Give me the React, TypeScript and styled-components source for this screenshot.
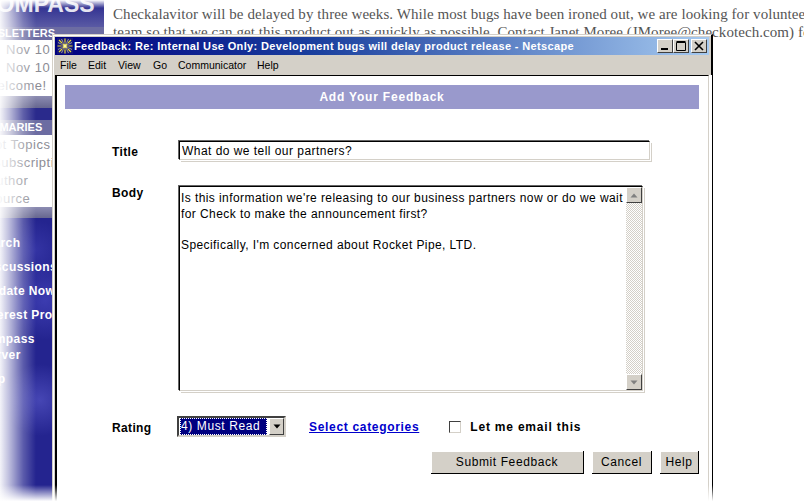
import React from "react"
import styled, { createGlobalStyle } from "styled-components"

const Global = createGlobalStyle`
  html, body {
    margin: 0;
    padding: 0;
    background: #fff;
    overflow: hidden;
  }
  * { box-sizing: border-box; }
`

const Desktop = styled.div`
  position: relative;
  width: 804px;
  height: 503px;
  overflow: hidden;
  display: flex;
  background: #fff;
  font-family: "Liberation Sans", Arial, sans-serif;
`

const Sidebar = styled.aside`
  width: 104px;
  height: 503px;
  flex-shrink: 0;
  display: flex;
  flex-direction: column;
  overflow: hidden;
  background:
    radial-gradient(circle at 45px 300px, #3c3cb0 0, transparent 40px),
    radial-gradient(circle at 40px 400px, #4646b4 0, transparent 36px),
    radial-gradient(circle at 35px 250px, #3434a4 0, transparent 30px),
    #24248f;
`

const Logo = styled.div`
  height: 27px;
  flex-shrink: 0;
  background: linear-gradient(180deg, #25258c, #5a5aa4);
  color: #e4e4f0;
  font-size: 23px;
  font-weight: bold;
  line-height: 8px;
  white-space: nowrap;
  margin-left: -20px;
`

const Band = styled.div<{ $height: number }>`
  height: ${(p) => p.$height}px;
  flex-shrink: 0;
  background: #6c6ca2;
  color: #fff;
  font-size: 11px;
  font-weight: bold;
  line-height: ${(p) => p.$height}px;
  white-space: nowrap;
`

const BandLabel = styled.span<{ $shift: number }>`
  display: block;
  margin-left: ${(p) => p.$shift}px;
`

const LinkList = styled.div<{ $height: number }>`
  height: ${(p) => p.$height}px;
  flex-shrink: 0;
  background: #fff;
  padding-top: 1px;
`

const LinkRow = styled.div<{ $shift: number }>`
  height: 18px;
  margin-left: ${(p) => p.$shift}px;
  font-size: 13px;
  line-height: 18px;
  color: #8c8c94;
  white-space: nowrap;
  letter-spacing: 0.5px;
`

const Divider = styled.div<{ $height: number }>`
  height: ${(p) => p.$height}px;
  flex-shrink: 0;
  background: linear-gradient(180deg, #8c8cb2, #66668f);
`

const DarkStrip = styled.div`
  height: 12px;
  flex-shrink: 0;
  background: #2a2a8c;
`

const NavList = styled.nav`
  display: flex;
  flex-direction: column;
  padding-top: 17px;
`

const NavItem = styled.div<{ $shift: number; $gap?: number }>`
  margin-left: ${(p) => p.$shift}px;
  margin-bottom: ${(p) => p.$gap ?? 8}px;
  color: #fff;
  font-size: 12px;
  font-weight: bold;
  line-height: 16px;
  letter-spacing: 0.4px;
  white-space: nowrap;
`

const Article = styled.main`
  flex: 1;
  min-width: 0;
  padding: 0 0 0 9px;
  font-family: "Liberation Serif", "Times New Roman", serif;
  font-size: 15px;
  letter-spacing: 0.07px;
  line-height: 18px;
  color: #555;
  white-space: nowrap;
`

const ArticleLine = styled.div`
  height: 18px;
  &:first-child { margin-top: 5px; }
`

const LeftFade = styled.div`
  position: absolute;
  left: 0;
  top: 0;
  bottom: 0;
  width: 36px;
  background: linear-gradient(90deg, rgba(255,255,255,0.95) 0, rgba(255,255,255,0.7) 25%, rgba(255,255,255,0.25) 65%, rgba(255,255,255,0) 100%);
`

const TopFade = styled.div`
  position: absolute;
  left: 0;
  right: 0;
  top: 0;
  height: 8px;
  background: linear-gradient(180deg, #fff, rgba(255,255,255,0));
`

const BottomFade = styled.div`
  position: absolute;
  left: 0;
  right: 0;
  bottom: 0;
  height: 18px;
  background: linear-gradient(180deg, rgba(255,255,255,0), #fff 90%);
`

const Window = styled.section`
  position: absolute;
  left: 52px;
  top: 34px;
  width: 661px;
  height: 490px;
  display: flex;
  flex-direction: column;
  background: #d4d0c8;
  border-top: 1px solid #d4d0c8;
  border-left: 1px solid #d4d0c8;
  border-right: 2px solid #000;
  border-bottom: 2px solid #000;
  padding: 2px;
  box-shadow: inset 1px 1px 0 #fff;
`

const TitleBar = styled.header`
  height: 18px;
  flex-shrink: 0;
  display: flex;
  align-items: center;
  padding: 0 2px;
  background: linear-gradient(90deg, #000080 0, #1a3f9e 40%, #a6caf0 100%);
`

const AppIcon = styled.svg`
  width: 16px;
  height: 16px;
  flex-shrink: 0;
  margin-right: 1px;
`

const TitleText = styled.div`
  flex: 1;
  min-width: 0;
  color: #fff;
  font-size: 11px;
  font-weight: bold;
  letter-spacing: 0.35px;
  white-space: nowrap;
`

const CaptionButtons = styled.div`
  display: flex;
`

const CaptionButton = styled.div<{ $gap?: number }>`
  width: 16px;
  height: 14px;
  margin-left: ${(p) => p.$gap ?? 0}px;
  display: flex;
  align-items: center;
  justify-content: center;
  background: #d4d0c8;
  border-top: 1px solid #fff;
  border-left: 1px solid #fff;
  border-right: 1px solid #404040;
  border-bottom: 1px solid #404040;
`

const MenuBar = styled.nav`
  height: 20px;
  flex-shrink: 0;
  display: flex;
  align-items: center;
  padding-left: 5px;
  font-size: 10.5px;
  color: #000;
`

const MenuItem = styled.span<{ $width: number }>`
  width: ${(p) => p.$width}px;
`

const Content = styled.div`
  flex: 1;
  min-height: 0;
  background: #fff;
  border-top: 1px solid #000;
  border-left: 2px solid #000;
  border-right: 1px solid #d4d0c8;
  box-shadow: 3px 0 0 #fff;
  padding: 9px 8px 0 8px;
  display: flex;
  flex-direction: column;
`

const PageHeader = styled.h1`
  height: 24px;
  margin: 0 1px 0 0;
  flex-shrink: 0;
  background: #9999cc;
  color: #fff;
  font-size: 12px;
  font-weight: bold;
  line-height: 24px;
  text-align: center;
  letter-spacing: 0.8px;
`

const FormGrid = styled.form`
  display: grid;
  grid-template-columns: 66px 1fr;
  grid-template-rows: 22px 207px 21px;
  row-gap: 23px;
  margin: 31px 0 0 47px;
`

const Label = styled.label`
  font-size: 12px;
  font-weight: bold;
  letter-spacing: 0.35px;
  color: #000;
  line-height: 24px;
`

const BodyLabel = styled(Label)`
  line-height: 17px;
`

const RatingLabel = styled(Label)`
  line-height: 26px;
`

const TitleInput = styled.input`
  display: block;
  width: 471px;
  height: 19px;
  margin: 1px 0 0 1px;
  padding: 0 2px;
  outline: none;
  background: #fff;
  border: 1px solid #000;
  border-right-color: #d4d0c8;
  border-bottom-color: #d4d0c8;
  box-shadow: -1px -1px 0 #666, 1px 1px 0 #fff, 2px 2px 0 #d4d0c8;
  font-family: "Liberation Sans", Arial, sans-serif;
  font-size: 12px;
  letter-spacing: 0.46px;
  color: #000;
`

const BodyBox = styled.div`
  width: 464px;
  height: 205px;
  margin: 1px 0 0 1px;
  display: flex;
  background: #fff;
  border: 1px solid #000;
  border-right-color: #d4d0c8;
  border-bottom-color: #d4d0c8;
  box-shadow: -1px -1px 0 #666, 1px 1px 0 #fff, 2px 2px 0 #d4d0c8;
`

const BodyText = styled.div`
  flex: 1;
  min-width: 0;
  padding: 4px 0 0 1px;
  font-size: 12px;
  line-height: 15.5px;
  letter-spacing: 0.42px;
  color: #000;
`

const BodyPara = styled.p`
  margin: 0 0 15.5px;
`

const ScrollBar = styled.div`
  width: 16px;
  flex-shrink: 0;
  display: flex;
  flex-direction: column;
  background-image: repeating-conic-gradient(#d4d0c8 0 25%, #fff 0 50%);
  background-size: 2px 2px;
`

const ScrollTrack = styled.div`
  flex: 1;
`

const ScrollArrow = styled.div`
  height: 16px;
  flex-shrink: 0;
  display: flex;
  align-items: center;
  justify-content: center;
  background: #d4d0c8;
  border-top: 1px solid #fff;
  border-left: 1px solid #fff;
  border-right: 1px solid #404040;
  border-bottom: 1px solid #404040;
`

const RatingRow = styled.div`
  display: flex;
  align-items: center;
  height: 21px;
  margin-top: 1px;
`

const SelectBox = styled.div`
  width: 109px;
  height: 21px;
  margin-left: -1px;
  display: flex;
  flex-shrink: 0;
  background: #fff;
  border: 2px solid #404040;
  border-right-color: #d4d0c8;
  border-bottom-color: #d4d0c8;
`

const SelectValue = styled.div`
  flex: 1;
  margin: 0 2px 0 1px;
  background: #000080;
  outline: 1px dotted #fff;
  outline-offset: -1px;
  color: #fff;
  font-size: 12px;
  line-height: 16px;
  letter-spacing: 0.6px;
  padding-left: 1px;
  white-space: nowrap;
`

const SelectArrow = styled(ScrollArrow)`
  width: 15px;
  height: 17px;
`

const CategoriesLink = styled.a`
  margin-left: 23px;
  color: #0000cc;
  font-size: 12px;
  font-weight: bold;
  letter-spacing: 0.68px;
  text-decoration: underline;
  cursor: pointer;
`

const Checkbox = styled.span`
  width: 12px;
  height: 12px;
  margin-left: 30px;
  flex-shrink: 0;
  background: #fff;
  border-top: 1px solid #404040;
  border-left: 1px solid #404040;
  border-right: 1px solid #d4d0c8;
  border-bottom: 1px solid #d4d0c8;
`

const CheckboxLabel = styled.span`
  margin-left: 9px;
  font-size: 12px;
  font-weight: bold;
  letter-spacing: 0.8px;
  color: #000;
`

const ButtonRow = styled.div`
  display: flex;
  justify-content: flex-end;
  gap: 8px;
  margin: 15px 1px 0 0;
`

const Button = styled.button<{ $width: number }>`
  width: ${(p) => p.$width}px;
  height: 23px;
  padding: 0;
  background: #d4d0c8;
  border: 0;
  border-right: 1px solid #000;
  border-bottom: 1px solid #000;
  box-shadow: inset 1px 1px 0 #fff;
  font-family: "Liberation Sans", Arial, sans-serif;
  font-size: 12px;
  letter-spacing: 0.6px;
  color: #000;
`

const Arrow = ({ up, color }: { up?: boolean; color: string }) => (
  <svg width="8" height="5" viewBox="0 0 8 5">
    <path d={up ? "M4 0.5 L7.5 4.5 H0.5 Z" : "M0.5 0.5 H7.5 L4 4.5 Z"} fill={color} />
  </svg>
)

const Throbber = () => (
  <AppIcon viewBox="0 0 16 16">
    <rect width="16" height="16" fill="#14147a" />
    <g fill="none">
      <path d="M8 0.5 V15.5 M0.5 8 H15.5 M2 2 L14 14 M14 2 L2 14" stroke="#e8d830" strokeWidth="1.2" />
      <path d="M4.5 1 L11.5 15 M11.5 1 L4.5 15 M1 4.5 L15 11.5 M15 4.5 L1 11.5" stroke="#d8d8a0" strokeWidth="0.7" />
      <path d="M5 5 H11 V11 H5 Z" stroke="#20208a" strokeWidth="0.7" />
    </g>
    <circle cx="8" cy="8" r="1.2" fill="#fff8a0" />
  </AppIcon>
)

export default function App() {
  return (
    <Desktop>
      <Global />
      <Sidebar>
        <Logo>COMPASS</Logo>
        <Band $height={13}>
          <BandLabel $shift={-28}>NEWSLETTERS</BandLabel>
        </Band>
        <LinkList $height={56}>
          <LinkRow $shift={6}>Nov 10 -</LinkRow>
          <LinkRow $shift={6}>Nov 10 -</LinkRow>
          <LinkRow $shift={-15}>Welcome!</LinkRow>
        </LinkList>
        <Divider $height={12} />
        <DarkStrip />
        <Band $height={15}>
          <BandLabel $shift={-25}>SUMMARIES</BandLabel>
        </Band>
        <LinkList $height={72}>
          <LinkRow $shift={-15}>Hot Topics</LinkRow>
          <LinkRow $shift={-8}>Subscriptions</LinkRow>
          <LinkRow $shift={-13}>Author</LinkRow>
          <LinkRow $shift={-14}>Source</LinkRow>
        </LinkList>
        <Divider $height={11} />
        <NavList>
          <NavItem $shift={-22}>Search</NavItem>
          <NavItem $shift={-18}>Discussions</NavItem>
          <NavItem $shift={-18}>Update Now</NavItem>
          <NavItem $shift={-19}>Interest Profile</NavItem>
          <NavItem $shift={-22} $gap={0}>Compass</NavItem>
          <NavItem $shift={-19}>Server</NavItem>
          <NavItem $shift={-22}>Help</NavItem>
        </NavList>
      </Sidebar>
      <Article>
        <ArticleLine>Checkalavitor will be delayed by three weeks. While most bugs have been ironed out, we are looking for volunteers</ArticleLine>
        <ArticleLine>team so that we can get this product out as quickly as possible. Contact Janet Moree (JMoree@checkotech.com) for</ArticleLine>
      </Article>
      <TopFade />
      <LeftFade />
      <Window>
        <TitleBar>
          <Throbber />
          <TitleText>Feedback: Re: Internal Use Only: Development bugs will delay product release - Netscape</TitleText>
          <CaptionButtons>
            <CaptionButton>
              <svg width="10" height="10" viewBox="0 0 10 10"><rect x="1" y="7" width="7" height="2" fill="#000" /></svg>
            </CaptionButton>
            <CaptionButton>
              <svg width="10" height="10" viewBox="0 0 10 10"><path d="M0.5 1.5 H9.5 V9.5 H0.5 Z M0.5 0.5 H9.5" fill="none" stroke="#000" /></svg>
            </CaptionButton>
            <CaptionButton $gap={2}>
              <svg width="10" height="10" viewBox="0 0 10 10"><path d="M1 1 L9 9 M9 1 L1 9" stroke="#000" strokeWidth="1.6" /></svg>
            </CaptionButton>
          </CaptionButtons>
        </TitleBar>
        <MenuBar>
          <MenuItem $width={28}>File</MenuItem>
          <MenuItem $width={30}>Edit</MenuItem>
          <MenuItem $width={35}>View</MenuItem>
          <MenuItem $width={25}>Go</MenuItem>
          <MenuItem $width={79}>Communicator</MenuItem>
          <MenuItem $width={30}>Help</MenuItem>
        </MenuBar>
        <Content>
          <PageHeader>Add Your Feedback</PageHeader>
          <FormGrid>
            <Label>Title</Label>
            <TitleInput readOnly value="What do we tell our partners?" />
            <BodyLabel>Body</BodyLabel>
            <BodyBox>
              <BodyText>
                <BodyPara>
                  Is this information we're releasing to our business partners now or do we wait for Check to make the announcement first?
                </BodyPara>
                <BodyPara>Specifically, I'm concerned about Rocket Pipe, LTD.</BodyPara>
              </BodyText>
              <ScrollBar>
                <ScrollArrow><Arrow up color="#808080" /></ScrollArrow>
                <ScrollTrack />
                <ScrollArrow><Arrow color="#808080" /></ScrollArrow>
              </ScrollBar>
            </BodyBox>
            <RatingLabel>Rating</RatingLabel>
            <RatingRow>
              <SelectBox>
                <SelectValue>4) Must Read</SelectValue>
                <SelectArrow><Arrow color="#000" /></SelectArrow>
              </SelectBox>
              <CategoriesLink>Select categories</CategoriesLink>
              <Checkbox />
              <CheckboxLabel>Let me email this</CheckboxLabel>
            </RatingRow>
          </FormGrid>
          <ButtonRow>
            <Button type="button" $width={153}>Submit Feedback</Button>
            <Button type="button" $width={60}>Cancel</Button>
            <Button type="button" $width={39}>Help</Button>
          </ButtonRow>
        </Content>
      </Window>
      <BottomFade />
    </Desktop>
  )
}
